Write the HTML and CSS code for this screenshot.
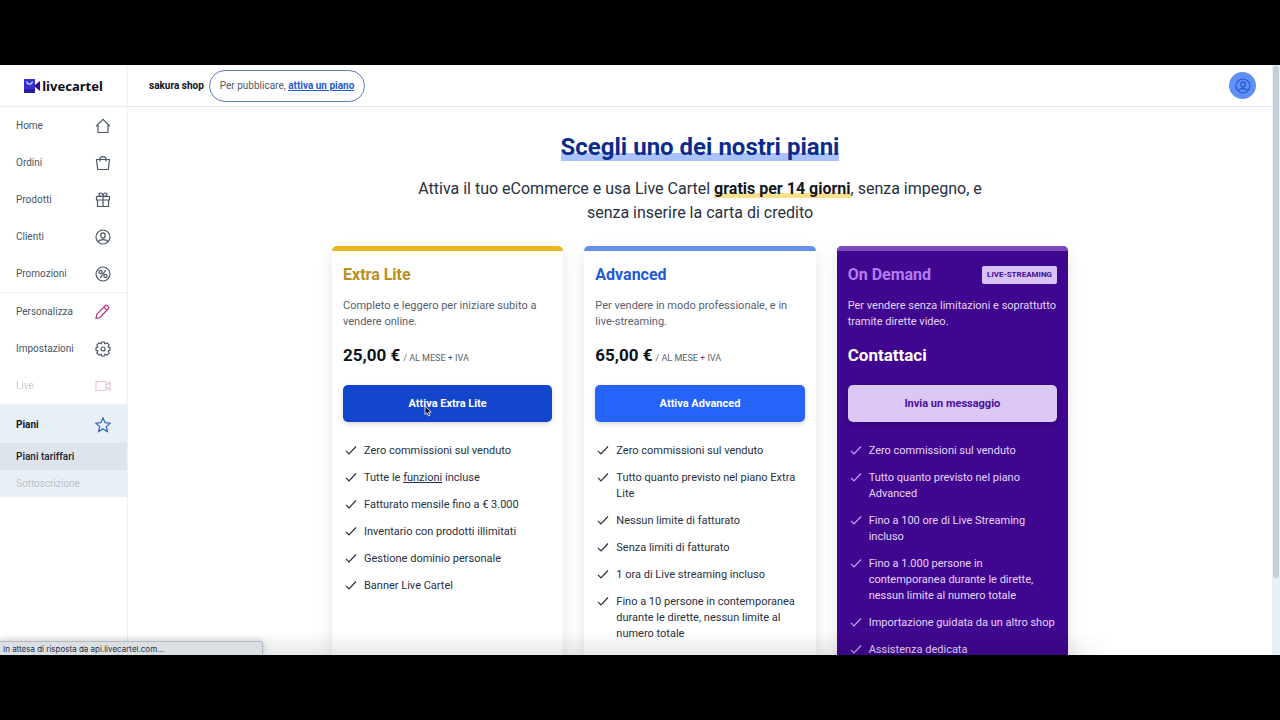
FILE: index.html
```
<!DOCTYPE html>
<html lang="it">
<head>
    <meta charset="UTF-8">
    <meta name="viewport" content="width=device-width, initial-scale=1.0">
    <title>Piani tariffari - livecartel</title>
    <link rel="stylesheet" href="styles.css">
</head>
<body>

    <!-- Shared icons -->
    <svg class="sprite" width="0" height="0">
        <symbol id="check" viewBox="0 0 12 12"><path d="M1 6.800l3 3L11 2.500"/></symbol>
        <symbol id="user" viewBox="0 0 16 16"><circle cx="8" cy="8" r="7"/><ellipse cx="8" cy="6.500" rx="2.200" ry="2.700"/><path d="M3 12.600C4.300 11 6 10.700 8 10.700S11.700 11 13 12.600"/></symbol>
    </svg>

    <div class="app">
        <aside class="sidebar">
            <a class="logo" href="#">
                <svg width="16" height="14" viewBox="0 0 16 14">
                    <path d="M0 0h11v14H0z" fill="#3b2fd0"/>
                    <path d="M0 10h11v4H0z" fill="#2a1ca8"/>
                    <path d="M11 6l5-4v10l-5-4z" fill="#3d0a8c"/>
                    <path d="M2.500 2.500C3.300 6 7.700 6 8.500 2.500" fill="none" stroke="#b9d3ff" stroke-width="1.200"/>
                </svg>
                <span>livecartel</span>
            </a>
            <nav>
                <ul class="menu">
                    <li><a href="#">Home <svg viewBox="0 0 16 16"><path d="M1 8.300L8 1.300l7 7M3 6.500v8h10v-8"/></svg></a></li>
                    <li><a href="#">Ordini <svg viewBox="0 0 16 16"><path d="M1.500 4.500h13l-1.200 10H2.700zM5 6.500V4C5 .7 11 .7 11 4v2.500"/></svg></a></li>
                    <li><a href="#">Prodotti <svg viewBox="0 0 16 16"><path d="M1.500 4.500h13V8h-13zM2.500 8v6.500h11V8M8 4.500v10M8 4.500C3 4.500 3.500 1 5.500 1S8 3 8 4.500C8 3 8.500 1 10.500 1S13 4.500 8 4.500"/></svg></a></li>
                    <li><a href="#">Clienti <svg><use href="#user"/></svg></a></li>
                    <li><a href="#">Promozioni <svg viewBox="0 0 16 16"><circle cx="8" cy="8" r="7"/><circle cx="5.500" cy="6" r="1.600"/><circle cx="10.500" cy="10" r="1.600"/><path d="M10.800 4.200l-5.600 7.600"/></svg></a></li>
                </ul>
                <ul class="menu">
                    <li><a href="#">Personalizza <svg class="pink" viewBox="0 0 16 16"><path d="M1 14.500l.8-4.300L10.500 1.500c1-1 4.200 1.800 3 3L5 13.500zM9 3.200l3 3"/></svg></a></li>
                    <li><a href="#">Impostazioni <svg viewBox="0 0 16 16"><path d="M6.700 1h2.600l.6 1.800 2.300-.9 1.900 1.900-.9 2.300 1.800.6v2.600l-1.800.6.9 2.300-1.900 1.900-2.300-.9-.6 1.800H6.700l-.6-1.800-2.300.9-1.900-1.900.9-2.300L1 9.300V6.700l1.800-.6-.9-2.300 1.900-1.900 2.300.9z"/><circle cx="8" cy="8" r="2"/></svg></a></li>
                    <li class="disabled"><a href="#">Live <svg class="pink" viewBox="0 0 16 16"><path d="M1 3.500h10v9H1zM11 7l4-3v8l-4-3"/></svg></a></li>
                </ul>
                <div class="menu-open">
                    <a class="current" href="#">Piani <svg viewBox="0 0 16 16"><path d="M8 1l2.100 4.700 5 .5-3.800 3.400 1.100 5L8 12l-4.400 2.600 1.100-5L.9 6.200l5-.5z"/></svg></a>
                    <a class="sub active" href="#">Piani tariffari</a>
                    <a class="sub off" href="#">Sottoscrizione</a>
                </div>
            </nav>
        </aside>

        <div class="content">
            <header class="topbar">
                <strong>sakura shop</strong>
                <span class="notice">Per pubblicare, <a href="#">attiva un piano</a></span>
                <button class="avatar" type="button" aria-label="Profilo"><svg><use href="#user"/></svg></button>
            </header>

            <main>
                <h1><span>Scegli uno dei nostri piani</span></h1>
                <p class="intro">Attiva il tuo eCommerce e usa Live Cartel <b>gratis per 14 giorni</b>, senza impegno, e senza inserire la carta di credito</p>

                <div class="plans">
                    <section class="plan lite">
                        <div class="plan-head"><h2>Extra Lite</h2></div>
                        <p class="plan-text">Completo e leggero per iniziare subito a vendere online.</p>
                        <p class="price">25,00 €<small>/ AL MESE + IVA</small></p>
                        <button type="button">Attiva Extra Lite</button>
                        <ul>
                            <li><svg><use href="#check"/></svg><span>Zero commissioni sul venduto</span></li>
                            <li><svg><use href="#check"/></svg><span>Tutte le <a href="#">funzioni</a> incluse</span></li>
                            <li><svg><use href="#check"/></svg><span>Fatturato mensile fino a € 3.000</span></li>
                            <li><svg><use href="#check"/></svg><span>Inventario con prodotti illimitati</span></li>
                            <li><svg><use href="#check"/></svg><span>Gestione dominio personale</span></li>
                            <li><svg><use href="#check"/></svg><span>Banner Live Cartel</span></li>
                        </ul>
                    </section>

                    <section class="plan advanced">
                        <div class="plan-head"><h2>Advanced</h2></div>
                        <p class="plan-text">Per vendere in modo professionale, e in live-streaming.</p>
                        <p class="price">65,00 €<small>/ AL MESE + IVA</small></p>
                        <button type="button">Attiva Advanced</button>
                        <ul>
                            <li><svg><use href="#check"/></svg><span>Zero commissioni sul venduto</span></li>
                            <li><svg><use href="#check"/></svg><span>Tutto quanto previsto nel piano Extra Lite</span></li>
                            <li><svg><use href="#check"/></svg><span>Nessun limite di fatturato</span></li>
                            <li><svg><use href="#check"/></svg><span>Senza limiti di fatturato</span></li>
                            <li><svg><use href="#check"/></svg><span>1 ora di Live streaming incluso</span></li>
                            <li><svg><use href="#check"/></svg><span>Fino a 10 persone in contemporanea durante le dirette, nessun limite al numero totale</span></li>
                        </ul>
                    </section>

                    <section class="plan demand">
                        <div class="plan-head"><h2>On Demand</h2><span class="tag">LIVE-STREAMING</span></div>
                        <p class="plan-text">Per vendere senza limitazioni e soprattutto tramite dirette video.</p>
                        <p class="price">Contattaci</p>
                        <button type="button">Invia un messaggio</button>
                        <ul>
                            <li><svg><use href="#check"/></svg><span>Zero commissioni sul venduto</span></li>
                            <li><svg><use href="#check"/></svg><span>Tutto quanto previsto nel piano Advanced</span></li>
                            <li><svg><use href="#check"/></svg><span>Fino a 100 ore di Live Streaming incluso</span></li>
                            <li><svg><use href="#check"/></svg><span>Fino a 1.000 persone in contemporanea durante le dirette, nessun limite al numero totale</span></li>
                            <li><svg><use href="#check"/></svg><span>Importazione guidata da un altro shop</span></li>
                            <li><svg><use href="#check"/></svg><span>Assistenza dedicata</span></li>
                        </ul>
                    </section>
                </div>
            </main>
        </div>

        <div class="scrollbar"><div class="thumb"></div></div>
        <div class="shade"></div>
        <div class="status">In attesa di risposta da api.livecartel.com...</div>
        <svg class="cursor" viewBox="0 0 8 12"><path d="M1 1v8.500l2-1.800L4.500 11l1.500-.7L4.600 7.200h2.600z" fill="#111" stroke="#fff" stroke-width=".8"/></svg>
    </div>

</body>
</html>
```
FILE: styles.css
```
* {
    box-sizing: border-box;
}
body {
    margin: 0;
    height: 100vh;
    padding: 65px 0;
    background: #000;
    font-family: Roboto, "Liberation Sans", sans-serif;
    font-size: 11px;
    line-height: 16px;
    color: #27303f;
    overflow: hidden;
}
h1, h2, p, ul {
    margin: 0;
    padding: 0;
}
ul {
    list-style: none;
}
a {
    color: inherit;
}
button {
    font: inherit;
    border: none;
    cursor: pointer;
}
svg {
    fill: none;
    stroke: currentColor;
    stroke-width: 1.2;
    flex-shrink: 0;
}
.sprite {
    position: absolute;
}
.app {
    position: relative;
    display: flex;
    height: 100%;
    background: #fff;
    overflow: hidden;
}

/* Sidebar */
.sidebar {
    width: 128px;
    flex-shrink: 0;
    border-right: 1px solid #edf1f4;
    font-size: 10px;
}
.logo {
    display: flex;
    align-items: center;
    justify-content: center;
    gap: 2px;
    height: 42px;
    border-bottom: 1px solid #e6ecf0;
    font-family: "Noto Sans", sans-serif;
    font-size: 13px;
    font-weight: 700;
    color: #0d0d18;
    text-decoration: none;
}
.logo svg {
    stroke: none;
}
.menu {
    border-bottom: 1px solid #eef1f4;
}
.menu a, .current {
    display: flex;
    align-items: center;
    justify-content: space-between;
    height: 37px;
    padding: 1px 16px 0;
    color: #4a5565;
    text-decoration: none;
}
.menu svg, .current svg {
    width: 16px;
    height: 16px;
}
.menu .pink {
    color: #b83280;
}
.disabled {
    opacity: 0.3;
}
.menu-open {
    background: #e9f0f5;
}
.menu-open .current {
    height: 38px;
    color: #10182b;
    font-weight: 700;
}
.current svg {
    color: #2b62c4;
}
.sub {
    display: block;
    padding: 5px 16px;
    line-height: 17px;
    color: #1a2233;
    text-decoration: none;
}
.sub.active {
    background: #dde4eb;
    font-weight: 500;
}
.sub.off {
    color: #b9c2cc;
}

/* Top bar */
.content {
    flex: 1;
    min-width: 0;
}
.topbar {
    display: flex;
    align-items: center;
    gap: 5px;
    height: 42px;
    padding: 0 16px 0 21px;
    border-bottom: 1px solid #e2e9ee;
    font-size: 10px;
}
.topbar strong {
    color: #0c111d;
}
.notice {
    padding: 7px 10px;
    border: 1px solid #5f7fc0;
    border-radius: 16px;
    color: #4f5a69;
}
.notice a {
    color: #2558d3;
    font-weight: 700;
}
.avatar {
    display: flex;
    align-items: center;
    justify-content: center;
    width: 27px;
    height: 27px;
    margin-left: auto;
    padding: 0;
    border-radius: 50%;
    background: #6090f5;
    color: #2558d3;
}
.avatar svg {
    width: 16px;
    height: 16px;
}

/* Plans page */
main {
    max-width: 736px;
    margin: 0 auto;
    padding-top: 24px;
}
h1 {
    font-size: 24px;
    line-height: 32px;
    text-align: center;
    color: #0b2c8c;
}
h1 span {
    background: linear-gradient(transparent 70%, #a9c2fb 70%);
}
.intro {
    max-width: 580px;
    margin: 14px auto 21px;
    font-size: 16px;
    line-height: 24px;
    text-align: center;
}
.intro b {
    color: #12161f;
    background: linear-gradient(transparent 75%, #f9e08a 75%);
}
.plans {
    display: grid;
    grid-template-columns: repeat(3, 1fr);
    gap: 21px;
}
.plan {
    position: relative;
    min-height: 430px;
    padding: 17px 11px;
    border-radius: 5px;
    background: #fff;
    box-shadow: 0 6px 16px rgba(0, 0, 0, 0.1);
    overflow: hidden;
}
/* coloured strip on top of the card */
.plan::before {
    content: "";
    position: absolute;
    top: 0;
    left: 0;
    right: 0;
    height: 5px;
    background: #e9b71b;
}
.plan-head {
    display: flex;
    align-items: center;
    justify-content: space-between;
    height: 24px;
}
h2 {
    font-size: 16px;
    color: #b8901f;
}
.plan-text {
    margin-top: 11px;
    color: #566170;
}
.price {
    display: flex;
    align-items: baseline;
    gap: 3px;
    height: 24px;
    margin: 13px 0 18px;
    font-size: 17px;
    line-height: 24px;
    font-weight: 700;
    color: #0d121c;
}
.price small {
    font-size: 9px;
    font-weight: 400;
    color: #566170;
}
.plan button {
    width: 100%;
    height: 37px;
    border-radius: 5px;
    background: #1345cd;
    color: #fff;
    font-weight: 700;
    box-shadow: 0 2px 5px rgba(0, 0, 0, 0.16);
}
.plan ul {
    display: flex;
    flex-direction: column;
    gap: 11px;
    margin-top: 21px;
}
.plan li {
    display: flex;
    gap: 7px;
    padding-left: 2px;
}
.plan li svg {
    width: 12px;
    height: 12px;
    margin-top: 1px;
}
.advanced::before {
    background: #6490ec;
}
.advanced h2 {
    color: #2259d6;
}
.plan.advanced button {
    background: #2563fa;
}
.plan.demand {
    background: #3f068f;
    color: #e9d5fb;
}
.demand::before {
    background: #7c4bbd;
}
.demand h2 {
    color: #b57cf2;
}
.demand .plan-text {
    color: #e6d5f7;
}
.demand .price {
    color: #fff;
}
.plan.demand button {
    background: #dac7f3;
    color: #4a0f9c;
}
.demand li svg {
    color: #c9a3f5;
}
.tag {
    padding: 0 5px;
    border-radius: 2px;
    background: #d9c2f5;
    color: #430d92;
    font-size: 8px;
    line-height: 18px;
    font-weight: 700;
}

/* Browser parts lying over the page */
.scrollbar {
    width: 8px;
    padding: 1px;
    background: #e9f0f5;
}
.thumb {
    height: 87%;
    border-radius: 3px;
    background: #c3cedb;
}
.shade {
    position: absolute;
    left: 0;
    right: 13%;
    bottom: 0;
    height: 24px;
    background: linear-gradient(transparent, rgba(0, 0, 0, 0.09));
    -webkit-mask-image: linear-gradient(to left, transparent, #000 60px);
    mask-image: linear-gradient(to left, transparent, #000 60px);
    pointer-events: none;
}
.status {
    position: absolute;
    left: 0;
    bottom: 0;
    width: 263px;
    height: 14px;
    padding-left: 3px;
    border: 1px solid #b4babf;
    border-width: 1px 1px 0 0;
    border-radius: 0 3px 0 0;
    background: #d9dfe3;
    font-family: Inter, sans-serif;
    font-size: 8px;
    line-height: 14px;
    box-shadow: 0 0 6px rgba(0, 0, 0, 0.2);
}
.cursor {
    position: absolute;
    left: 424px;
    top: 340px;
    width: 8px;
    height: 12px;
}
```
